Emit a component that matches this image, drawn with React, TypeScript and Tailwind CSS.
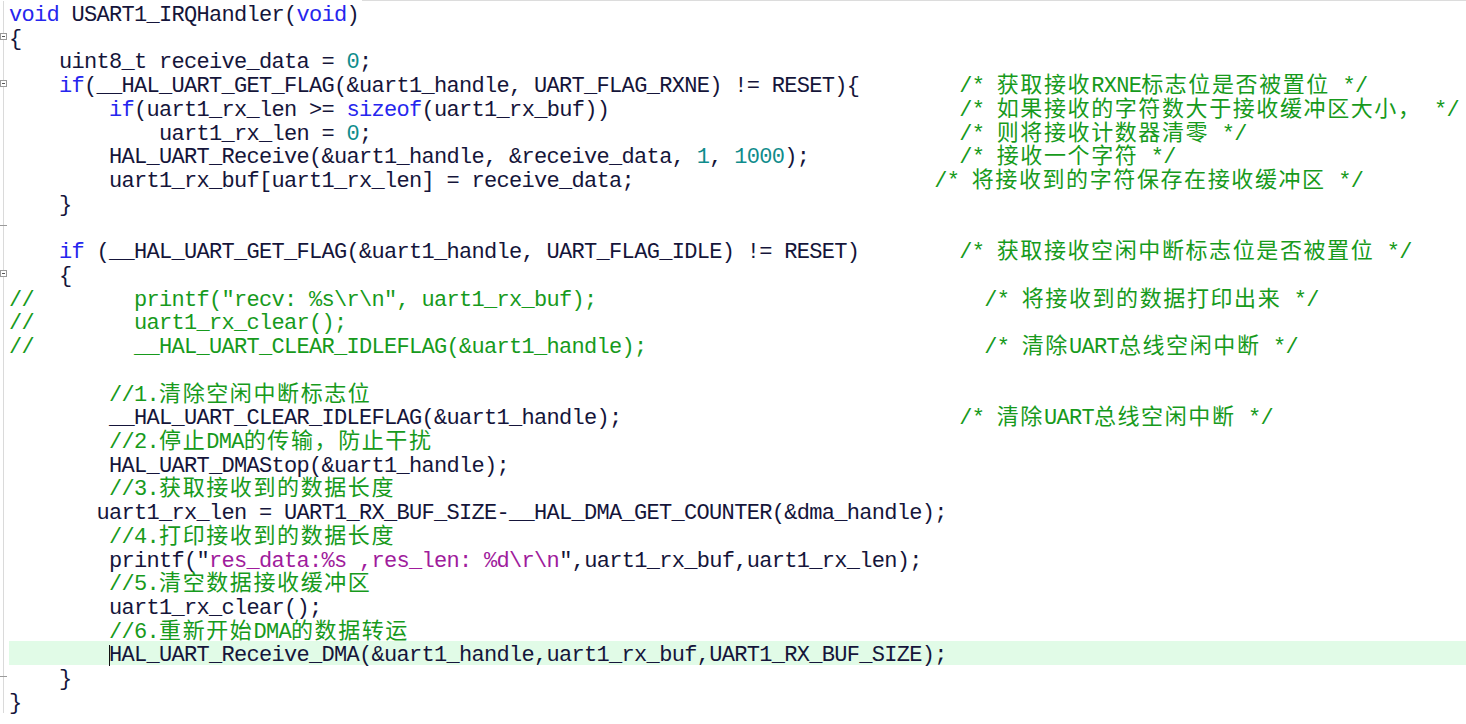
type Seg = [string, string]

interface Line {
  indent?: number
  segs: Seg[]
  comment?: string
  col?: number
  fold?: 'box' | 'end'
  active?: boolean
}

const lines: Line[] = [
  { segs: [['k', 'void'], ['p', ' USART1_IRQHandler('], ['k', 'void'], ['p', ')']] },
  { segs: [['p', '{']], fold: 'box' },
  { indent: 4, segs: [['p', 'uint8_t receive_data = '], ['n', '0'], ['p', ';']] },
  {
    indent: 4,
    segs: [['k', 'if'], ['p', '(__HAL_UART_GET_FLAG(&uart1_handle, UART_FLAG_RXNE) != RESET){']],
    comment: '/* 获取接收RXNE标志位是否被置位 */',
    col: 76,
    fold: 'box'
  },
  {
    indent: 8,
    segs: [['k', 'if'], ['p', '(uart1_rx_len >= '], ['k', 'sizeof'], ['p', '(uart1_rx_buf))']],
    comment: '/* 如果接收的字符数大于接收缓冲区大小， */',
    col: 76
  },
  { indent: 12, segs: [['p', 'uart1_rx_len = '], ['n', '0'], ['p', ';']], comment: '/* 则将接收计数器清零 */', col: 76 },
  {
    indent: 8,
    segs: [['p', 'HAL_UART_Receive(&uart1_handle, &receive_data, '], ['n', '1'], ['p', ', '], ['n', '1000'], ['p', ');']],
    comment: '/* 接收一个字符 */',
    col: 76
  },
  { indent: 8, segs: [['p', 'uart1_rx_buf[uart1_rx_len] = receive_data;']], comment: '/* 将接收到的字符保存在接收缓冲区 */', col: 74 },
  { indent: 4, segs: [['p', '}']] },
  { segs: [], fold: 'end' },
  {
    indent: 4,
    segs: [['k', 'if'], ['p', ' (__HAL_UART_GET_FLAG(&uart1_handle, UART_FLAG_IDLE) != RESET)']],
    comment: '/* 获取接收空闲中断标志位是否被置位 */',
    col: 76
  },
  { indent: 4, segs: [['p', '{']], fold: 'box' },
  { segs: [['c', '//        printf("recv: %s\\r\\n", uart1_rx_buf);']], comment: '/* 将接收到的数据打印出来 */', col: 78 },
  { segs: [['c', '//        uart1_rx_clear();']] },
  { segs: [['c', '//        __HAL_UART_CLEAR_IDLEFLAG(&uart1_handle);']], comment: '/* 清除UART总线空闲中断 */', col: 78 },
  { segs: [] },
  { indent: 8, segs: [['c', '//1.清除空闲中断标志位']] },
  { indent: 8, segs: [['p', '__HAL_UART_CLEAR_IDLEFLAG(&uart1_handle);']], comment: '/* 清除UART总线空闲中断 */', col: 76 },
  { indent: 8, segs: [['c', '//2.停止DMA的传输，防止干扰']] },
  { indent: 8, segs: [['p', 'HAL_UART_DMAStop(&uart1_handle);']] },
  { indent: 8, segs: [['c', '//3.获取接收到的数据长度']] },
  { indent: 7, segs: [['p', 'uart1_rx_len = UART1_RX_BUF_SIZE-__HAL_DMA_GET_COUNTER(&dma_handle);']] },
  { indent: 8, segs: [['c', '//4.打印接收到的数据长度']] },
  {
    indent: 8,
    segs: [['p', 'printf("'], ['s', 'res_data:%s ,res_len: %d\\r\\n'], ['p', '",uart1_rx_buf,uart1_rx_len);']]
  },
  { indent: 8, segs: [['c', '//5.清空数据接收缓冲区']] },
  { indent: 8, segs: [['p', 'uart1_rx_clear();']] },
  { indent: 8, segs: [['c', '//6.重新开始DMA的数据转运']] },
  { indent: 8, segs: [['p', 'HAL_UART_Receive_DMA(&uart1_handle,uart1_rx_buf,UART1_RX_BUF_SIZE);']], active: true },
  { indent: 4, segs: [['p', '}']], fold: 'end' },
  { segs: [['p', '}']] }
]

const colors: Record<string, string> = {
  p: 'text-[#15153a]',
  k: 'text-[#2626ee]',
  n: 'text-[#0f8c8c]',
  c: 'text-[#179a1c]',
  s: 'text-[#a01c9c]'
}

// split a text into latin / cjk runs so each gets its own advance width
function Runs({ text, kind }: { text: string; kind: string }) {
  const parts = text.split(/([\u3000-\u9fff\uff00-\uffef]+)/).filter(Boolean)
  return (
    <>
      {parts.map((part, i) =>
        /[\u3000-\u9fff\uff00-\uffef]/.test(part) ? (
          <span key={i} className={`${colors[kind]} font-['Noto_Sans_CJK_SC',sans-serif] tracking-[1.6px] leading-[0px]`}>
            {part}
          </span>
        ) : (
          <span key={i} className={`${colors[kind]} tracking-[-0.7px]`}>
            {part}
          </span>
        )
      )}
    </>
  )
}

function FoldMark({ fold }: { fold?: 'box' | 'end' }) {
  return (
    <div className="relative w-[9px] shrink-0">
      <div className="absolute left-[3px] top-0 bottom-0 w-px bg-[#dadada]" />
      {fold === 'box' && (
        <div className="absolute left-0 top-[8px] w-[7px] h-[7px] border border-[#9a9a9a] bg-white flex items-center justify-center">
          <div className="w-[3px] h-px bg-[#555]" />
        </div>
      )}
      {fold === 'end' && <div className="absolute left-0 top-[11px] w-[7px] h-px bg-[#9a9a9a]" />}
    </div>
  )
}

function CodeLine({ line }: { line: Line }) {
  const indent = line.indent ?? 0
  const codeLen = indent + line.segs.reduce((n, s) => n + s[1].length, 0)
  const pad = line.comment ? ' '.repeat(Math.max(1, (line.col ?? 0) - codeLen)) : ''

  return (
    <div className="flex h-[23.72px]">
      <FoldMark fold={line.fold} />
      <div className={`relative flex-1 whitespace-pre pt-[3px] ${line.active ? 'bg-[#e1fbe7]' : ''}`}>
        <span className="tracking-[-0.7px]">{' '.repeat(indent)}</span>
        {line.active && <span className="inline-block w-px h-[21px] align-middle -mr-px bg-[#111]" />}
        {line.segs.map((s, i) => (
          <Runs key={i} text={s[1]} kind={s[0]} />
        ))}
        {line.comment && (
          <>
            <span className="tracking-[-0.7px]">{pad}</span>
            <Runs text={line.comment} kind="c" />
          </>
        )}
      </div>
    </div>
  )
}

export default function App() {
  return (
    <div className="w-[1466px] h-[724px] bg-white overflow-hidden font-['Liberation_Mono','Noto_Sans_CJK_SC',monospace] text-[22px] leading-[23.72px]">
      <div className="flex h-px">
        <div className="w-[362px]" />
        <div className="flex-1 bg-[#dcdcdc]" />
      </div>
      {lines.map((line, i) => (
        <CodeLine key={i} line={line} />
      ))}
    </div>
  )
}
